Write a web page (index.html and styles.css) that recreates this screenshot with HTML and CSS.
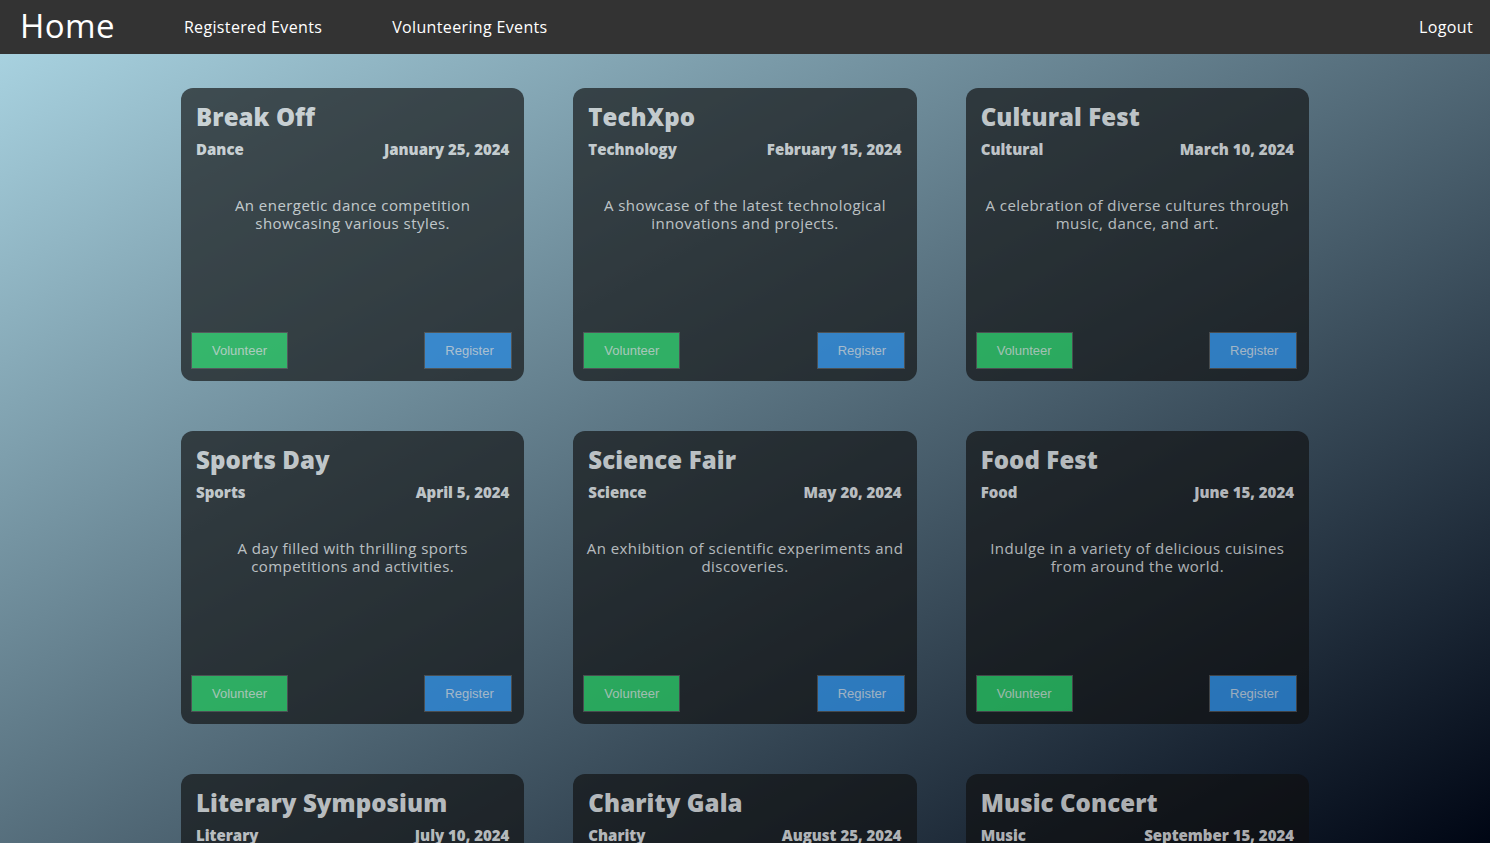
FILE: index.html
```html
<!DOCTYPE html>
<html lang="en">
<head>
<meta charset="utf-8">
<title>Home</title>
<link rel="stylesheet" href="styles.css">
</head>
<body>
<nav class="navbar">
  <a class="brand" href="#">Home</a>
  <a class="nav-link" href="#">Registered Events</a>
  <a class="nav-link" href="#">Volunteering Events</a>
  <a class="nav-link logout" href="#">Logout</a>
</nav>
<main class="events">
  <div class="card">
    <h2 class="title">Break Off</h2>
    <div class="meta"><span>Dance</span><span>January 25, 2024</span></div>
    <p class="desc">An energetic dance competition showcasing various styles.</p>
    <div class="actions"><button class="btn volunteer">Volunteer</button><button class="btn register">Register</button></div>
  </div>
  <div class="card">
    <h2 class="title">TechXpo</h2>
    <div class="meta"><span>Technology</span><span>February 15, 2024</span></div>
    <p class="desc">A showcase of the latest technological innovations and projects.</p>
    <div class="actions"><button class="btn volunteer">Volunteer</button><button class="btn register">Register</button></div>
  </div>
  <div class="card">
    <h2 class="title">Cultural Fest</h2>
    <div class="meta"><span>Cultural</span><span>March 10, 2024</span></div>
    <p class="desc">A celebration of diverse cultures through music, dance, and art.</p>
    <div class="actions"><button class="btn volunteer">Volunteer</button><button class="btn register">Register</button></div>
  </div>
  <div class="card">
    <h2 class="title">Sports Day</h2>
    <div class="meta"><span>Sports</span><span>April 5, 2024</span></div>
    <p class="desc">A day filled with thrilling sports competitions and activities.</p>
    <div class="actions"><button class="btn volunteer">Volunteer</button><button class="btn register">Register</button></div>
  </div>
  <div class="card">
    <h2 class="title">Science Fair</h2>
    <div class="meta"><span>Science</span><span>May 20, 2024</span></div>
    <p class="desc">An exhibition of scientific experiments and discoveries.</p>
    <div class="actions"><button class="btn volunteer">Volunteer</button><button class="btn register">Register</button></div>
  </div>
  <div class="card">
    <h2 class="title">Food Fest</h2>
    <div class="meta"><span>Food</span><span>June 15, 2024</span></div>
    <p class="desc">Indulge in a variety of delicious cuisines from around the world.</p>
    <div class="actions"><button class="btn volunteer">Volunteer</button><button class="btn register">Register</button></div>
  </div>
  <div class="card">
    <h2 class="title">Literary Symposium</h2>
    <div class="meta"><span>Literary</span><span>July 10, 2024</span></div>
    <p class="desc">A gathering of authors and readers celebrating the written word.</p>
    <div class="actions"><button class="btn volunteer">Volunteer</button><button class="btn register">Register</button></div>
  </div>
  <div class="card">
    <h2 class="title">Charity Gala</h2>
    <div class="meta"><span>Charity</span><span>August 25, 2024</span></div>
    <p class="desc">An elegant evening raising funds for a meaningful cause.</p>
    <div class="actions"><button class="btn volunteer">Volunteer</button><button class="btn register">Register</button></div>
  </div>
  <div class="card">
    <h2 class="title">Music Concert</h2>
    <div class="meta"><span>Music</span><span>September 15, 2024</span></div>
    <p class="desc">A night of live performances by talented local musicians.</p>
    <div class="actions"><button class="btn volunteer">Volunteer</button><button class="btn register">Register</button></div>
  </div>
</main>
</body>
</html>
```
FILE: styles.css
```css
* { box-sizing: border-box; }
html, body { margin: 0; padding: 0; }
body {
  font-family: "Open Sans", "Noto Sans", sans-serif;
  background: linear-gradient(to bottom right, #add8e6, #000614) fixed;
  min-height: 100vh;
  color: #fff;
}
.navbar {
  height: 54px;
  background: #333333;
  display: flex;
  align-items: center;
  padding: 0 17px 0 20px;
}
.navbar a { color: #fff; text-decoration: none; }
.brand {
  font-size: 33px;
  letter-spacing: 0.4px;
  margin-right: 69px;
  line-height: 40px;
  margin-bottom: 2px;
}
.nav-link {
  font-size: 16px;
  letter-spacing: 0.35px;
  margin-right: 70px;
}
.nav-link.logout { margin-left: auto; margin-right: 0; }
.events {
  width: 1128px;
  margin: 34px auto 0;
  display: grid;
  grid-template-columns: repeat(3, 1fr);
  column-gap: 49px;
  row-gap: 50px;
  padding-bottom: 40px;
}
.card {
  height: 293px;
  border-radius: 12px;
  background: rgba(16, 16, 16, 0.82);
  opacity: 0.8;
  color: rgba(255, 255, 255, 0.84);
  padding: 12px 15px 12px 15px;
  display: flex;
  flex-direction: column;
}
.title {
  margin: 0;
  font-size: 24px;
  line-height: 34px;
  font-weight: 800;
  letter-spacing: 0.1px;
}
.meta {
  display: flex;
  justify-content: space-between;
  font-size: 15px;
  font-weight: 800;
  letter-spacing: 0;
  line-height: 20px;
  margin-top: 5px;
}
.desc {
  margin: 38px -4px 0;
  text-align: center;
  font-size: 15px;
  letter-spacing: 0.45px;
  line-height: 17.5px;
  color: rgba(255, 255, 255, 0.8);
}
.actions {
  margin-top: auto;
  margin-left: -5px;
  margin-right: -3px;
  display: flex;
  justify-content: space-between;
}
.btn {
  font-family: "Liberation Sans", Arial, sans-serif;
  font-size: 13px;
  line-height: 15px;
  padding: 10px 20px;
  border: 1px solid #4a4a4a;
  color: rgba(225, 225, 225, 0.8);
  cursor: pointer;
}
.volunteer { background: #24bc5c; width: 97px; }
.register { background: #2c87d8; width: 88px; }
```
